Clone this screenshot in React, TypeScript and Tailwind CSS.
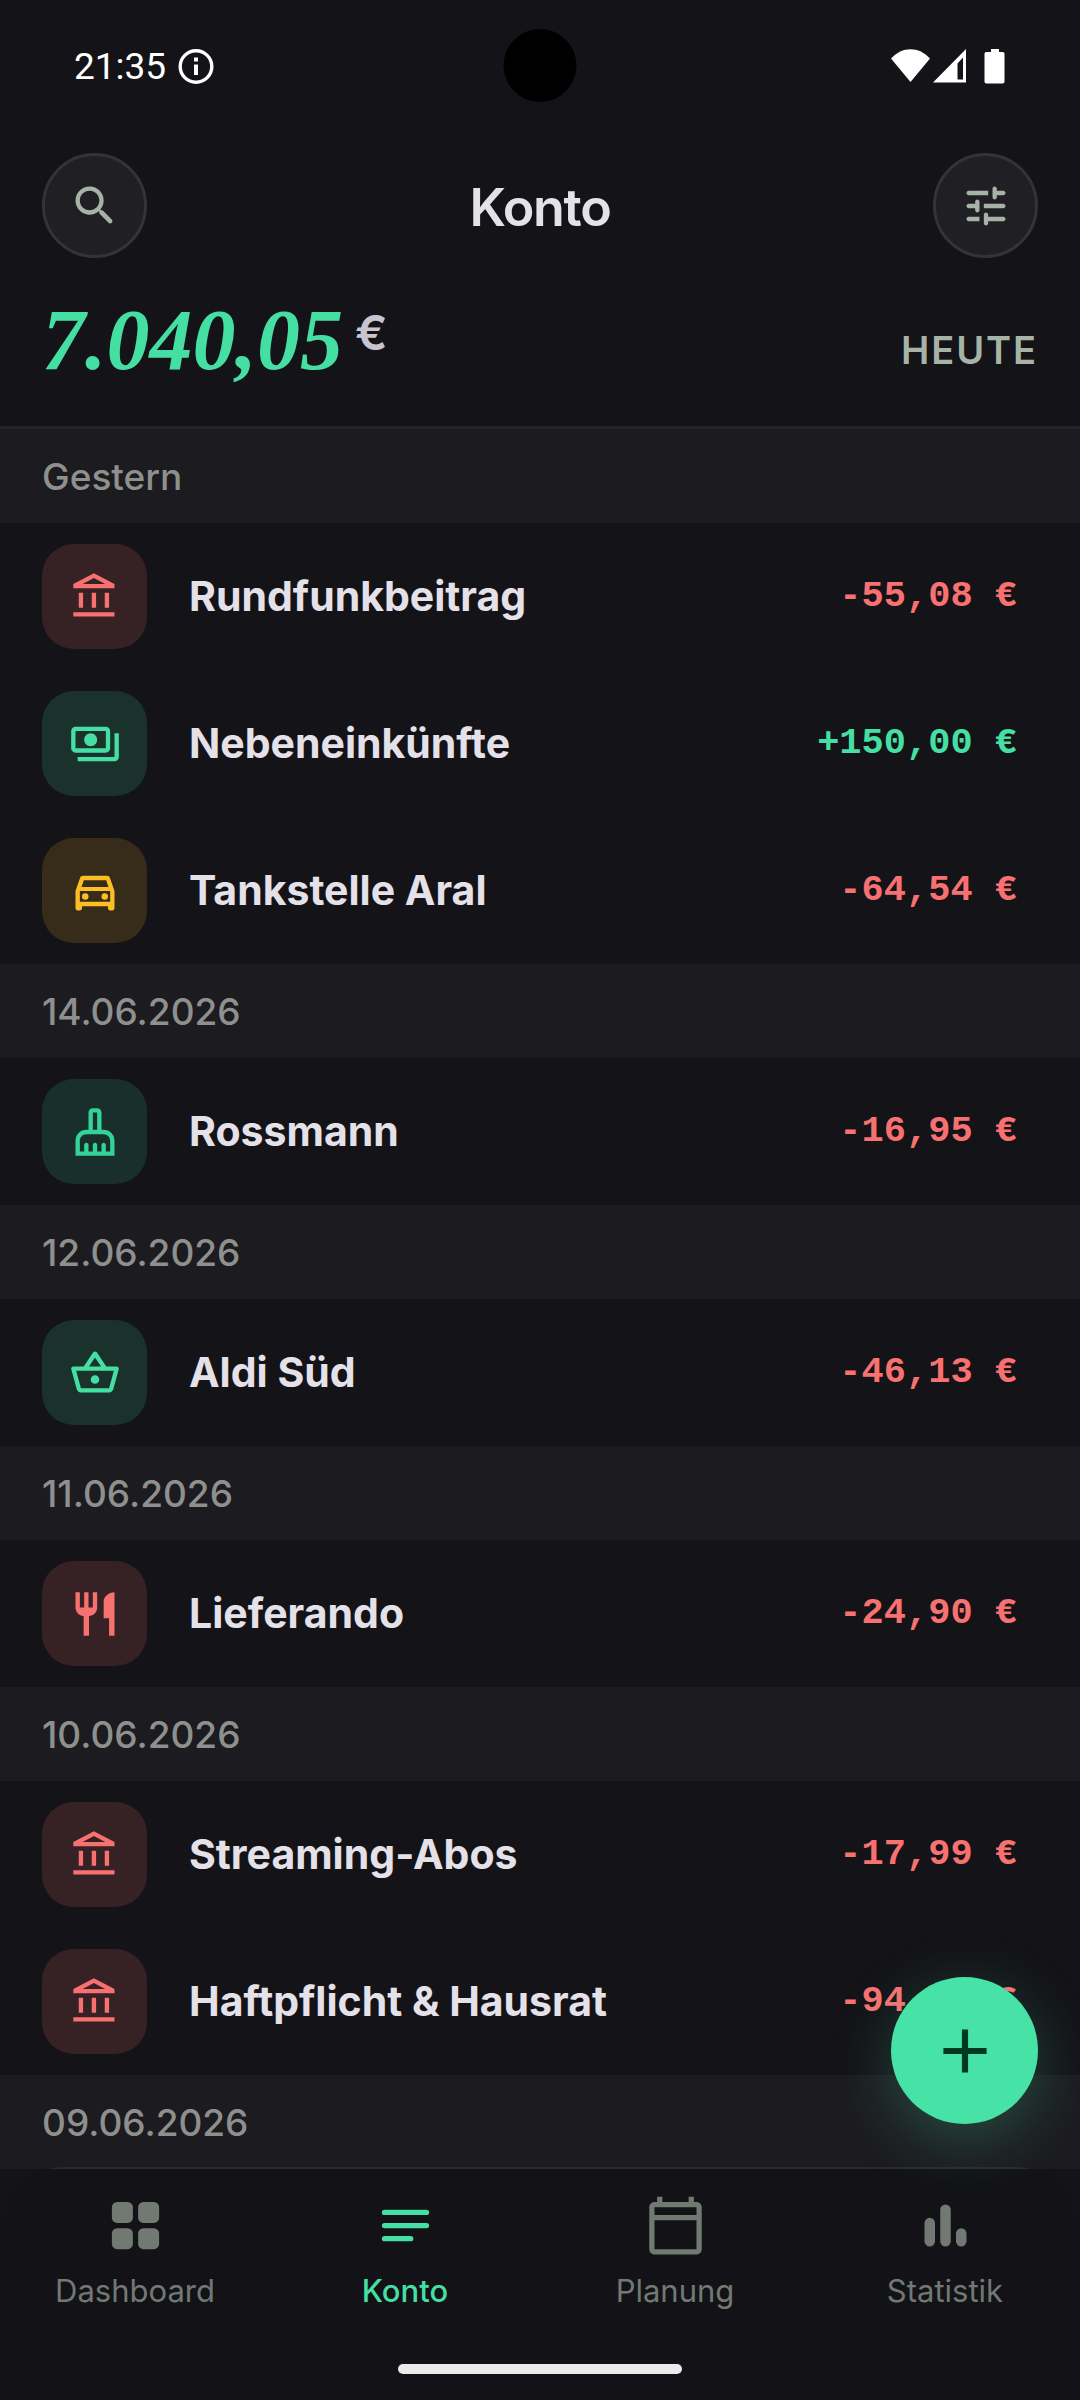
import React from "react";
import {
  MdOutlineAccountBalance,
  MdOutlineCleaningServices,
  MdOutlineDirectionsCar,
  MdOutlinePayments,
  MdOutlineShoppingBasket,
  MdRestaurant,
} from "react-icons/md";

type IconType = React.ComponentType<{ className?: string }>;

type Entry = {
  name: string;
  amount: string;
  icon: IconType;
  tone: keyof typeof tones;
};

const tones = {
  red: "bg-[#f87171]/15 text-[#f87171]",
  green: "bg-[#45dfa4]/15 text-[#45dfa4]",
  emerald: "bg-[#34d399]/15 text-[#34d399]",
  amber: "bg-[#fbbf24]/15 text-[#fbbf24]",
};

const groups: { date: string; entries: Entry[] }[] = [
  {
    date: "Gestern",
    entries: [
      { name: "Rundfunkbeitrag", amount: "-55,08 €", icon: MdOutlineAccountBalance, tone: "red" },
      { name: "Nebeneinkünfte", amount: "+150,00 €", icon: MdOutlinePayments, tone: "green" },
      { name: "Tankstelle Aral", amount: "-64,54 €", icon: MdOutlineDirectionsCar, tone: "amber" },
    ],
  },
  {
    date: "14.06.2026",
    entries: [
      { name: "Rossmann", amount: "-16,95 €", icon: MdOutlineCleaningServices, tone: "emerald" },
    ],
  },
  {
    date: "12.06.2026",
    entries: [
      { name: "Aldi Süd", amount: "-46,13 €", icon: MdOutlineShoppingBasket, tone: "green" },
    ],
  },
  {
    date: "11.06.2026",
    entries: [{ name: "Lieferando", amount: "-24,90 €", icon: MdRestaurant, tone: "red" }],
  },
  {
    date: "10.06.2026",
    entries: [
      { name: "Streaming-Abos", amount: "-17,99 €", icon: MdOutlineAccountBalance, tone: "red" },
      { name: "Haftpflicht & Hausrat", amount: "-94,50 €", icon: MdOutlineAccountBalance, tone: "red" },
    ],
  },
  { date: "09.06.2026", entries: [] },
];

const StatusBar = () => {
  return (
    <div className="relative flex h-[132px] items-center justify-between px-[74px] text-white">
      <div className="flex items-center gap-3">
        <span className="font-[Roboto,sans-serif] text-[37px] leading-none">21:35</span>
        <svg viewBox="0 0 36 36" className="size-9" fill="none" stroke="currentColor">
          <circle cx="18" cy="18.5" r="15.8" strokeWidth="3.4" />
          <path d="M18 16.5v10.5" strokeWidth="4" />
          <path d="M18 9.5v4" strokeWidth="4" />
        </svg>
      </div>
      <div className="absolute top-[29px] left-1/2 size-[73px] -translate-x-1/2 rounded-full bg-black" />
      <svg viewBox="0 0 116 36" className="h-9 w-[116px]" fill="currentColor">
        <path d="M1 10.500C12-2 29-2 40 10.500L20.500 34z" />
        <path fillRule="evenodd" d="M43 34.500L76 1v33.500zM67.500 15.500v16h5.500v-22z" />
        <path d="M101 1h8v3h3.500c1.400 0 2 .8 2 2v27.500c0 1.200-.7 2-2 2h-16c-1.300 0-2-.8-2-2V6c0-1.200.7-2 2-2h4.500z" />
      </svg>
    </div>
  );
};

const RoundButton = ({ label, children }: { label: string; children: React.ReactNode }) => {
  return (
    <button
      type="button"
      aria-label={label}
      className="flex size-[105px] items-center justify-center rounded-full border-[3px] border-[#343338] bg-[#201f24] text-[#a6b3a6]"
    >
      <svg viewBox="0 0 24 24" className="size-[52px]" fill="currentColor">
        {children}
      </svg>
    </button>
  );
};

const Header = () => {
  return (
    <header className="border-b-[3px] border-[#232228]">
      <StatusBar />
      <div className="flex items-center justify-between px-[42px] pt-[21px]">
        <RoundButton label="Suchen">
          <path d="M15.500 14h-.79l-.28-.27c1.200-1.400 1.820-3.310 1.480-5.340-.47-2.780-2.790-5-5.590-5.340-4.230-.52-7.790 3.040-7.270 7.270.34 2.800 2.560 5.120 5.340 5.590 2.030.34 3.940-.28 5.340-1.480l.27.28v.79l4.250 4.250c.41.41 1.080.41 1.490 0 .41-.41.41-1.080 0-1.490L15.500 14zm-6 0C7.010 14 5 11.990 5 9.500S7.010 5 9.500 5 14 7.010 14 9.500 11.990 14 9.500 14z" />
        </RoundButton>
        <h1 className="pt-1 text-[52px] leading-none font-semibold tracking-tight text-[#e4e1e9]">
          Konto
        </h1>
        <RoundButton label="Filter">
          <path d="M3 18c0 .55.45 1 1 1h5v-2H4c-.55 0-1 .45-1 1zM3 6c0 .55.45 1 1 1h9V5H4c-.55 0-1 .45-1 1zm10 14v-1h7c.55 0 1-.45 1-1s-.45-1-1-1h-7v-1c0-.55-.45-1-1-1s-1 .45-1 1v4c0 .55.45 1 1 1s1-.45 1-1zM7 10v1H4c-.55 0-1 .45-1 1s.45 1 1 1h3v1c0 .55.45 1 1 1s1-.45 1-1v-4c0-.55-.45-1-1-1s-1 .45-1 1zm14 2c0-.55-.45-1-1-1h-9v2h9c.55 0 1-.45 1-1zm-5-3c.55 0 1-.45 1-1V7h3c.55 0 1-.45 1-1s-.45-1-1-1h-3V4c0-.55-.45-1-1-1s-1 .45-1 1v4c0 .55.45 1 1 1z" />
        </RoundButton>
      </div>
      <div className="flex items-end justify-between px-[42px] pt-[39px] pb-[43px]">
        <p className="flex items-start gap-3">
          <span className="font-['Liberation_Serif',serif] text-[86px] leading-none font-bold text-[#45dfa4] italic">
            7.040,05
          </span>
          <span className="pt-3 text-[48px] leading-none font-semibold text-[#c8c5d0]">€</span>
        </p>
        <p className="pb-[14px] text-[38px] leading-none font-semibold tracking-wider text-[#a6b3a6]">
          HEUTE
        </p>
      </div>
    </header>
  );
};

const Row = ({ name, amount, icon: Icon, tone }: Entry) => {
  const amountColor = amount.startsWith("+") ? "text-[#45dfa4]" : "text-[#f87171]";
  return (
    <li className="flex items-center gap-[42px] py-[21px] pr-[63px] pl-[42px]">
      <span
        className={`flex size-[105px] shrink-0 items-center justify-center rounded-[32px] ${tones[tone]}`}
      >
        <Icon className="size-[52px]" />
      </span>
      <span className="flex-1 text-[41px] leading-none font-bold text-[#e4e1e9]">{name}</span>
      <span
        className={`font-['Liberation_Mono',monospace] text-[37px] leading-none font-bold whitespace-pre ${amountColor}`}
      >
        {amount}
      </span>
    </li>
  );
};

const navItems = [
  {
    label: "Dashboard",
    icon: (
      <>
        <rect x="3" y="3" width="8" height="8" rx="2" />
        <rect x="13" y="3" width="8" height="8" rx="2" />
        <rect x="3" y="13" width="8" height="8" rx="2" />
        <rect x="13" y="13" width="8" height="8" rx="2" />
      </>
    ),
  },
  {
    label: "Konto",
    active: true,
    icon: (
      <>
        <rect x="3" y="6" width="18" height="2" rx="1" />
        <rect x="3" y="11" width="18" height="2" rx="1" />
        <rect x="3" y="16" width="12" height="2" rx="1" />
      </>
    ),
  },
  {
    label: "Planung",
    icon: (
      <path d="M20 3h-1V1h-2v2H7V1H5v2H4c-1.100 0-2 .9-2 2v16c0 1.100.9 2 2 2h16c1.100 0 2-.9 2-2V5c0-1.100-.9-2-2-2zm0 2v3H4V5h16zM4 21V10h16v11H4z" />
    ),
  },
  {
    label: "Statistik",
    icon: (
      <>
        <rect x="4" y="9" width="4" height="11" rx="2" />
        <rect x="10" y="4" width="4" height="16" rx="2" />
        <rect x="16" y="13" width="4" height="7" rx="2" />
      </>
    ),
  },
];

const BottomNav = () => {
  return (
    <nav className="relative -mt-1 overflow-hidden rounded-t-[63px] bg-[#131217] pb-[26px]">
      <div className="h-0.5 bg-[#2a292e]" />
      <div className="grid grid-cols-4 pt-[25px]">
        {navItems.map(({ label, icon, active }) => (
          <a
            key={label}
            href="#"
            className={`flex flex-col items-center gap-[13px] ${
              active ? "font-medium text-[#45dfa4]" : "text-[#717972]"
            }`}
          >
            <svg viewBox="0 0 24 24" className="size-[63px]" fill="currentColor">
              {icon}
            </svg>
            <span className="text-[31px] leading-[42px]">{label}</span>
          </a>
        ))}
      </div>
      <div className="mx-auto mt-[52px] h-[10px] w-[284px] rounded-full bg-[#ebebeb]" />
    </nav>
  );
};

export default function App() {
  return (
    <div className="relative flex min-h-screen flex-col bg-[#141318] font-[Inter,sans-serif]">
      <Header />
      <main className="flex-1">
        {groups.map(({ date, entries }) => (
          <section key={date}>
            <h2 className="flex h-[94px] items-center bg-[#1c1b20] px-[42px] text-[37px] leading-none font-medium text-[#8e908e]">
              {date}
            </h2>
            <ul>
              {entries.map((entry) => (
                <Row key={entry.name} {...entry} />
              ))}
            </ul>
          </section>
        ))}
      </main>
      <BottomNav />
      <button
        type="button"
        aria-label="Buchung hinzufügen"
        className="absolute right-[42px] bottom-[276px] flex size-[147px] items-center justify-center rounded-full bg-[#47e2a6] text-[#00391f] shadow-[0_16px_63px_rgba(71,226,166,0.25)]"
      >
        <svg viewBox="0 0 24 24" className="size-[74px]" fill="currentColor">
          <path d="M19 13h-6v6h-2v-6H5v-2h6V5h2v6h6v2z" />
        </svg>
      </button>
    </div>
  );
}
